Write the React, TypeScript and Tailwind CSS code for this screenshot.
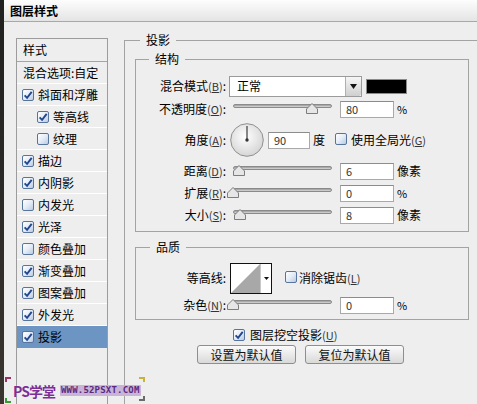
import React from "react";

const styleItems = [
  { name: "斜面和浮雕", on: true },
  { name: "等高线", on: true, sub: true },
  { name: "纹理", on: false, sub: true },
  { name: "描边", on: true },
  { name: "内阴影", on: true },
  { name: "内发光", on: false },
  { name: "光泽", on: true },
  { name: "颜色叠加", on: false },
  { name: "渐变叠加", on: true },
  { name: "图案叠加", on: true },
  { name: "外发光", on: true },
  { name: "投影", on: true, active: true },
];

const Check = ({ on }: { on?: boolean }) => (
  <span className="relative inline-flex h-[12px] w-[12px] shrink-0 rounded-[2px] border border-[#56749c] bg-gradient-to-br from-[#ffffff] via-[#e4ecf6] to-[#b9cbe3]">
    {on && (
      <svg viewBox="0 0 12 12" className="absolute -left-px -top-px h-[12px] w-[12px]">
        <path d="M2.6 6.3 L5.1 8.9 L9.7 2.9" fill="none" stroke="#23478f" strokeWidth="1.9" />
      </svg>
    )}
  </span>
);

// label with underlined access key, e.g. 混合模式(B):
const Label = ({ text, k, w = "w-[90px]" }: { text: string; k?: string; w?: string }) => (
  <span className={`${w} shrink-0 text-right`}>
    {text}
    {k && (
      <span className="text-[11px] text-[#333]">
        (<u>{k}</u>)
      </span>
    )}
    :
  </span>
);

const Slider = ({ pct }: { pct: number }) => (
  <div className="relative ml-[7px] h-[12px] w-[99px] shrink-0">
    <div className="absolute left-0 right-0 top-[1px] h-[4px] rounded-full border border-[#8a8a8a] bg-gradient-to-b from-[#9a9a9a] to-[#dadada]" />
    <svg
      width="12"
      height="11"
      viewBox="0 0 12 11"
      className="absolute top-0"
      style={{ left: `${Math.round(pct * 99) - 6}px` }}
    >
      <polygon points="6,0.5 11.5,6 11.5,10.5 0.5,10.5 0.5,6" fill="#e6e6e6" stroke="#7d7d7d" />
    </svg>
  </div>
);

const Field = ({ value, w = "w-[54px]", ml = "ml-[8px]" }: { value: string; w?: string; ml?: string }) => (
  <div className={`${ml} ${w} flex h-[17px] shrink-0 items-center border border-[#a9a9a9] border-t-[#8c8c8c] bg-white pl-[5px] text-[11px] text-[#333]`}>
    {value}
  </div>
);

const Button = ({ children }: { children: React.ReactNode }) => (
  <button className="flex h-[19px] w-[99px] items-center justify-center rounded-[3px] border border-[#8e8e8e] bg-gradient-to-b from-[#fbfbfb] to-[#d9d9d9] text-[12px] text-[#111]">
    {children}
  </button>
);

export default function App() {
  return (
    <div className="relative flex h-[404px] w-[477px] overflow-hidden bg-[#eeeeee] font-['Noto_Sans_CJK_SC','Liberation_Sans',sans-serif] text-[12px] leading-[16px] text-black">
      {/* dark edge of the window behind */}
      <div className="h-full w-[4px] shrink-0 bg-gradient-to-b from-[#202020] to-[#3a3530]" />

      <div className="flex min-w-0 flex-1 flex-col">
        {/* title bar */}
        <div className="flex h-[22px] shrink-0 items-center border-b border-[#a8a8a8] bg-gradient-to-b from-[#fdfdfd] to-[#e4e4e4] pl-[6px] text-[12px] font-bold">
          图层样式
        </div>

        <div className="flex">
          {/* styles list */}
          <div className="ml-[12px] mt-[16px] h-[400px] w-[92px] shrink-0 border border-b-0 border-[#9c9c9c]">
            <div className="flex h-[23px] items-center border-b border-[#a5a5a5] pl-[6px]">样式</div>
            <div className="flex h-[22px] items-center border-b border-white pl-[6px]">混合选项:自定</div>
            {styleItems.map((s) => (
              <div
                key={s.name}
                className={`flex h-[22px] items-center gap-[4px] border-b ${
                  s.active ? "border-[#6d95c4] bg-[#6d95c4]" : "border-white"
                } ${s.sub ? "pl-[20px]" : "pl-[5px]"}`}
              >
                <Check on={s.on} />
                <span>{s.name}</span>
              </div>
            ))}
          </div>

          {/* 投影 group */}
          <fieldset className="ml-[16px] mt-[10px] h-[420px] w-[360px] shrink-0 border border-[#a3a3a3] pl-[10px]">
            <legend className="ml-[5px] px-[6px] leading-[16px]">投影</legend>

            {/* 结构 */}
            <fieldset className="mt-[3px] w-[334px] border border-[#a3a3a3] pb-[5px] pt-[7px]">
              <legend className="ml-[13px] px-[6px] leading-[16px]">结构</legend>

              <div className="flex h-[24px] items-center">
                <Label text="混合模式" k="B" />
                <div className="ml-[3px] flex h-[21px] w-[133px] items-stretch border border-[#9b9b9b] bg-white">
                  <span className="flex flex-1 items-center pl-[7px]">正常</span>
                  <span className="flex w-[16px] items-center justify-center rounded-r-[2px] border-l border-[#b0b0b0] bg-gradient-to-b from-[#f6f6f6] to-[#cfcfcf]">
                    <svg width="7" height="5" viewBox="0 0 7 5">
                      <polygon points="0,0 7,0 3.5,5" fill="#111" />
                    </svg>
                  </span>
                </div>
                <div className="ml-[4px] h-[15px] w-[41px] border border-[#8a8a8a] bg-black" />
              </div>

              <div className="flex h-[22px] items-center">
                <Label text="不透明度" k="O" />
                <Slider pct={0.8} />
                <Field value="80" />
                <span className="ml-[3px] text-[11px]">%</span>
              </div>

              <div className="flex h-[40px] items-center">
                <Label text="角度" k="A" />
                <svg width="34" height="34" viewBox="0 0 34 34" className="ml-[4px] shrink-0">
                  <defs>
                    <radialGradient id="dial" cx="45%" cy="40%" r="65%">
                      <stop offset="0" stopColor="#ffffff" />
                      <stop offset="1" stopColor="#d2d2d2" />
                    </radialGradient>
                  </defs>
                  <circle cx="17" cy="17" r="16.3" fill="url(#dial)" stroke="#8f8f8f" />
                  <line x1="17" y1="17" x2="17" y2="3" stroke="#3c3c3c" strokeWidth="1.2" />
                  <circle cx="17" cy="17" r="1.7" fill="#333" />
                </svg>
                <Field value="90" w="w-[42px]" ml="ml-[4px]" />
                <span className="ml-[3px]">度</span>
                <span className="ml-[10px]">
                  <Check />
                </span>
                <span className="ml-[4px]">
                  使用全局光
                  <span className="text-[11px] text-[#333]">
                    (<u>G</u>)
                  </span>
                </span>
              </div>

              <div className="flex h-[22px] items-center">
                <Label text="距离" k="D" />
                <Slider pct={0.06} />
                <Field value="6" />
                <span className="ml-[3px]">像素</span>
              </div>
              <div className="flex h-[22px] items-center">
                <Label text="扩展" k="R" />
                <Slider pct={0} />
                <Field value="0" />
                <span className="ml-[3px] text-[11px]">%</span>
              </div>
              <div className="flex h-[22px] items-center">
                <Label text="大小" k="S" />
                <Slider pct={0.07} />
                <Field value="8" />
                <span className="ml-[3px]">像素</span>
              </div>
            </fieldset>

            {/* 品质 */}
            <fieldset className="mt-[7px] w-[334px] border border-[#a3a3a3] pb-[4px] pt-[6px]">
              <legend className="ml-[14px] px-[6px] leading-[16px]">品质</legend>

              <div className="flex h-[34px] items-center">
                <Label text="等高线" />
                <svg width="42" height="31" viewBox="0 0 42 31" className="ml-[4px] shrink-0">
                  <rect x="0.5" y="0.5" width="41" height="30" fill="#fff" stroke="#111" />
                  <polygon points="1,30 30,1 30,30" fill="#a8a8a8" />
                  <line x1="30.5" y1="1" x2="30.5" y2="30" stroke="#c8c8c8" />
                  <polygon points="34,14 39,14 36.5,17" fill="#111" />
                </svg>
                <span className="ml-[13px]">
                  <Check />
                </span>
                <span className="ml-[2px]">
                  消除锯齿
                  <span className="text-[11px] text-[#333]">
                    (<u>L</u>)
                  </span>
                </span>
              </div>

              <div className="flex h-[20px] items-center">
                <Label text="杂色" k="N" />
                <Slider pct={0} />
                <Field value="0" />
                <span className="ml-[3px] text-[11px]">%</span>
              </div>
            </fieldset>

            <div className="mt-[7px] flex h-[16px] items-center pl-[98px]">
              <Check on />
              <span className="ml-[5px]">
                图层挖空投影
                <span className="text-[11px] text-[#333]">
                  (<u>U</u>)
                </span>
              </span>
            </div>

            <div className="mt-[2px] flex gap-[9px] pl-[62px]">
              <Button>设置为默认值</Button>
              <Button>复位为默认值</Button>
            </div>
          </fieldset>
        </div>
      </div>

      {/* site watermark */}
      <div className="absolute left-[5px] top-[377px] flex h-[27px] w-[140px] items-center">
        <span className="absolute left-0 top-0 h-[5px] w-[6px] border-l-2 border-t-2 border-[#a0306a]" />
        <span className="absolute bottom-[1px] left-0 h-[5px] w-[6px] border-b-2 border-l-2 border-[#3a9a3a]" />
        <span className="absolute right-0 top-0 h-[5px] w-[6px] border-r-2 border-t-2 border-[#c8b23a]" />
        <span className="absolute bottom-[3px] right-0 h-[5px] w-[6px] border-b-2 border-r-2 border-[#6a6a6a]" />
        <span className="ml-[8px] text-[14px] font-bold tracking-[-1px] text-[#7b2f96] [text-shadow:0_0_1px_#fff]">
          PS学堂
        </span>
        <span className="ml-[5px] rounded-[1px] bg-[#c9b3d6] px-[1px] font-['DejaVu_Sans_Mono',monospace] text-[9px] font-bold leading-[11px] tracking-[0.2px] text-[#5b2a80]">
          WWW.52PSXT.COM
        </span>
      </div>
    </div>
  );
}
